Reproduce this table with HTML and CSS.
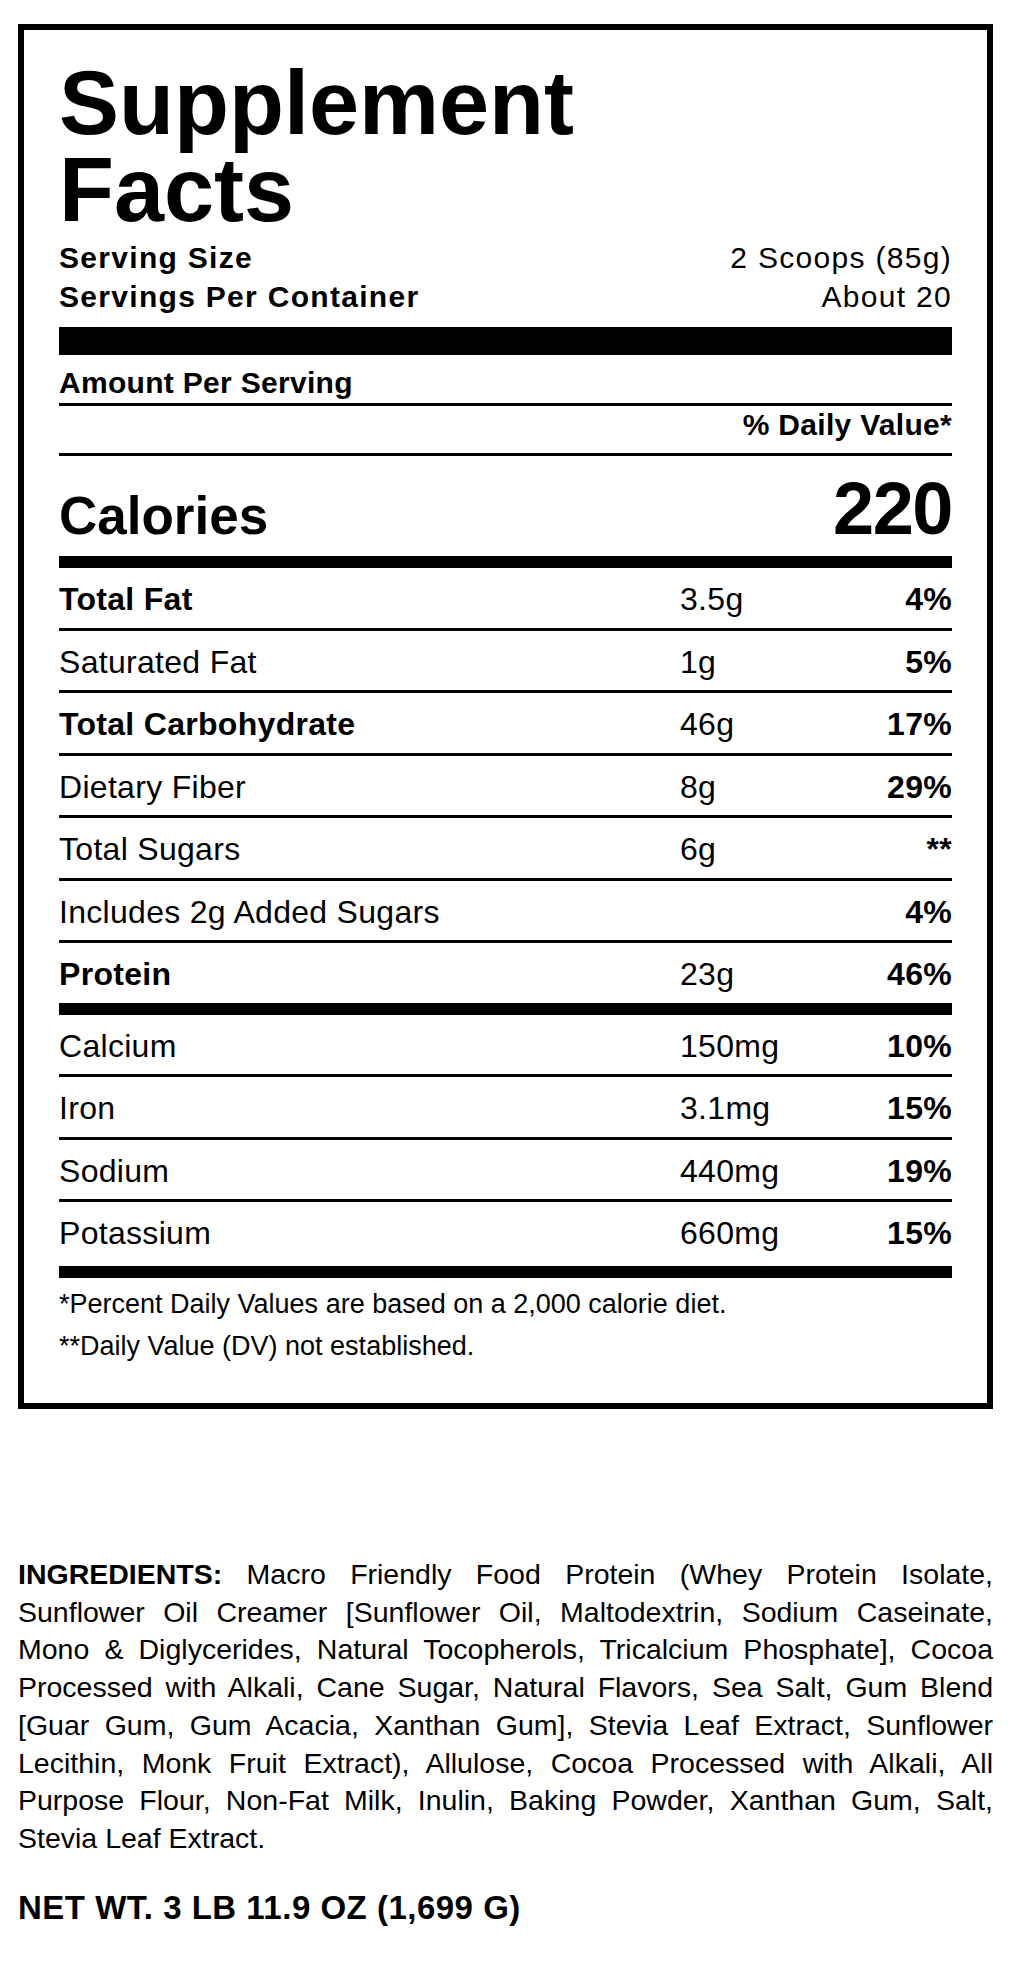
FILE: index.html
```html
<!DOCTYPE html>
<html lang="en">
<head>
<meta charset="utf-8">
<title>Supplement Facts</title>
<link rel="stylesheet" href="styles.css">
</head>
<body>
<main class="page">
  <section class="facts">
    <h1 class="facts-title">Supplement<br>Facts</h1>

    <div class="serving">
      <div class="serving-row"><span class="strong">Serving Size</span><span>2 Scoops (85g)</span></div>
      <div class="serving-row"><span class="strong">Servings Per Container</span><span>About 20</span></div>
    </div>

    <div class="amount-head">Amount Per Serving</div>
    <div class="dv-head">% Daily Value*</div>

    <div class="calories">
      <span class="calories-label">Calories</span>
      <span class="calories-value">220</span>
    </div>

    <div class="nutrients">
      <div class="row"><span class="name strong">Total Fat</span><span class="qty">3.5g</span><span class="dv">4%</span></div>
      <div class="row"><span class="name">Saturated Fat</span><span class="qty">1g</span><span class="dv">5%</span></div>
      <div class="row"><span class="name strong">Total Carbohydrate</span><span class="qty">46g</span><span class="dv">17%</span></div>
      <div class="row"><span class="name">Dietary Fiber</span><span class="qty">8g</span><span class="dv">29%</span></div>
      <div class="row"><span class="name">Total Sugars</span><span class="qty">6g</span><span class="dv">**</span></div>
      <div class="row"><span class="name">Includes 2g Added Sugars</span><span class="qty"></span><span class="dv">4%</span></div>
      <div class="row"><span class="name strong">Protein</span><span class="qty">23g</span><span class="dv">46%</span></div>
    </div>

    <div class="nutrients minerals">
      <div class="row"><span class="name">Calcium</span><span class="qty">150mg</span><span class="dv">10%</span></div>
      <div class="row"><span class="name">Iron</span><span class="qty">3.1mg</span><span class="dv">15%</span></div>
      <div class="row"><span class="name">Sodium</span><span class="qty">440mg</span><span class="dv">19%</span></div>
      <div class="row"><span class="name">Potassium</span><span class="qty">660mg</span><span class="dv">15%</span></div>
    </div>

    <div class="footnotes">
      <p>*Percent Daily Values are based on a 2,000 calorie diet.</p>
      <p>**Daily Value (DV) not established.</p>
    </div>
  </section>

  <p class="ingredients">
    <span class="line"><strong>INGREDIENTS:</strong> Macro Friendly Food Protein (Whey Protein Isolate,</span>
    <span class="line">Sunflower Oil Creamer [Sunflower Oil, Maltodextrin, Sodium Caseinate,</span>
    <span class="line">Mono &amp; Diglycerides, Natural Tocopherols, Tricalcium Phosphate], Cocoa</span>
    <span class="line">Processed with Alkali, Cane Sugar, Natural Flavors, Sea Salt, Gum Blend</span>
    <span class="line">[Guar Gum, Gum Acacia, Xanthan Gum], Stevia Leaf Extract, Sunflower</span>
    <span class="line">Lecithin, Monk Fruit Extract), Allulose, Cocoa Processed with Alkali, All</span>
    <span class="line">Purpose Flour, Non-Fat Milk, Inulin, Baking Powder, Xanthan Gum, Salt,</span>
    <span class="line last">Stevia Leaf Extract.</span>
  </p>

  <p class="net-wt">NET WT. 3 LB 11.9 OZ (1,699 G)</p>
</main>
</body>
</html>
```

FILE: styles.css
```css
html, body {
  margin: 0;
  padding: 0;
  background: #ffffff;
}

body {
  font-family: "Liberation Sans", Arial, Helvetica, sans-serif;
  color: #000000;
}

.page {
  width: 975px;
  padding: 24px 0 0 18px;
}

.strong {
  font-weight: 700;
}

/* ---------- Facts panel ---------- */
.facts {
  border: 6px solid #000;
  padding: 30px 35px 0 35px;
}

.facts-title {
  margin: 0;
  font-size: 90px;
  line-height: 87px;
  font-weight: 700;
  letter-spacing: 0;
}

.serving {
  margin-top: 4px;
  padding-bottom: 11px;
  border-bottom: 28px solid #000;
}

.serving-row {
  display: flex;
  justify-content: space-between;
  font-size: 30px;
  line-height: 39px;
  letter-spacing: 1.3px;
}

.amount-head {
  font-size: 30px;
  font-weight: 700;
  line-height: 38px;
  letter-spacing: 0.3px;
  padding: 9px 0 1px;
  border-bottom: 3px solid #000;
}

.dv-head {
  font-size: 30px;
  font-weight: 700;
  line-height: 38px;
  letter-spacing: 0.3px;
  text-align: right;
  padding-bottom: 9px;
  border-bottom: 3px solid #000;
}

.calories {
  display: flex;
  justify-content: space-between;
  align-items: baseline;
  padding: 16px 0 10px;
  border-bottom: 12px solid #000;
  font-weight: 700;
}

.calories-label {
  font-size: 53px;
  line-height: 53px;
}

.calories-value {
  font-size: 74px;
  line-height: 74px;
  letter-spacing: -1.5px;
}

/* ---------- Nutrient rows ---------- */
.nutrients {
  border-bottom: 12px solid #000;
}

.row {
  display: grid;
  grid-template-columns: 1fr 162px 110px;
  font-size: 32px;
  line-height: 55.5px;
  letter-spacing: 0.3px;
  padding-top: 4px;
  border-bottom: 3px solid #000;
}

.row:last-child {
  border-bottom: none;
}

.minerals .row:last-child {
  padding-bottom: 4.5px;
}

.dv {
  font-weight: 700;
  text-align: right;
}

/* ---------- Footnotes ---------- */
.footnotes {
  padding: 5px 0 36px;
}

.footnotes p {
  margin: 0;
  font-size: 27px;
  line-height: 42px;
}

/* ---------- Ingredients ---------- */
.ingredients {
  margin: 147px 0 0;
  font-size: 28.5px;
  line-height: 37.7px;
}

.ingredients .line {
  display: block;
  text-align: justify;
  text-align-last: justify;
}

.ingredients .line.last {
  text-align-last: left;
}

.net-wt {
  margin: 30px 0 0;
  font-size: 33px;
  line-height: 40px;
  font-weight: 700;
  letter-spacing: 0.5px;
}
```
